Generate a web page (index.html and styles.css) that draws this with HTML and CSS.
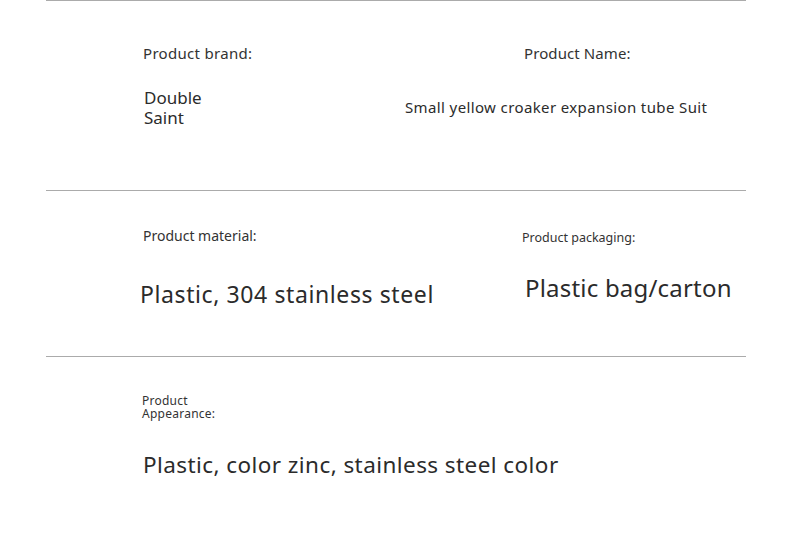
FILE: index.html
```html
<!DOCTYPE html>
<html>
<head>
<meta charset="utf-8">
<link rel="stylesheet" href="styles.css">
</head>
<body>
<div class="sheet">
  <section class="row row-1">
    <div class="cell">
      <div class="label l-brand">Product brand:</div>
      <div class="value v-brand">Double<br>Saint</div>
    </div>
    <div class="cell">
      <div class="label l-name">Product Name:</div>
      <div class="value v-name">Small yellow croaker expansion tube Suit</div>
    </div>
  </section>
  <section class="row row-2">
    <div class="cell">
      <div class="label l-material">Product material:</div>
      <div class="value v-material">Plastic, 304 stainless steel</div>
    </div>
    <div class="cell">
      <div class="label l-pack">Product packaging:</div>
      <div class="value v-pack">Plastic bag/carton</div>
    </div>
  </section>
  <section class="row row-3">
    <div class="cell">
      <div class="label l-appear">Product<br>Appearance:</div>
      <div class="value v-appear">Plastic, color zinc, stainless steel color</div>
    </div>
  </section>
</div>
</body>
</html>
```
FILE: styles.css
```css
html, body {
  margin: 0;
  padding: 0;
  background: #fff;
}
body {
  font-family: "Noto Sans", "Open Sans", sans-serif;
  color: #333;
  width: 790px;
  height: 535px;
  overflow: hidden;
}
.sheet {
  margin-left: 46px;
  width: 700px;
}
.row {
  display: grid;
  grid-template-columns: 354px 346px;
  border-top: 1px solid #ababab;
  box-sizing: border-box;
}
.row-1 { height: 190px; }
.row-2 { height: 166px; }
.row-3 { height: 179px; grid-template-columns: 1fr; }
.cell {
  display: flex;
  flex-direction: column;
  align-items: flex-start;
}
.label, .value { white-space: nowrap; }
.value { color: #2b2b2b; }

.l-brand { font-size: 15px; line-height: 20px; letter-spacing: 0.3px; margin: 42px 0 0 97px; }
.v-brand { font-size: 17px; line-height: 20px; margin: 25px 0 0 98px; }
.l-name { font-size: 15px; line-height: 20px; letter-spacing: 0.1px; margin: 42px 0 0 124px; }
.v-name { font-size: 15px; line-height: 20px; letter-spacing: 0.38px; margin: 34px 0 0 5px; }

.l-material { font-size: 14px; line-height: 20px; margin: 35px 0 0 97px; }
.v-material { font-size: 23px; line-height: 30px; letter-spacing: 0.6px; margin: 33px 0 0 94px; }
.l-pack { font-size: 12.5px; line-height: 18px; margin: 37.5px 0 0 122px; }
.v-pack { font-size: 24px; line-height: 30px; letter-spacing: 0.2px; margin: 26px 0 0 125px; }

.l-appear { font-size: 12px; line-height: 13px; letter-spacing: 0.25px; margin: 37px 0 0 96px; }
.v-appear { font-size: 22.5px; line-height: 30px; letter-spacing: 0.43px; margin: 30px 0 0 97px; }
```
